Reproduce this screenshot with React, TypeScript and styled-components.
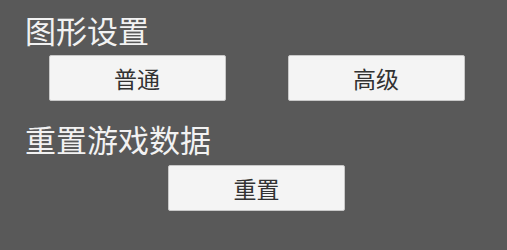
import React from 'react';
import styled, { createGlobalStyle } from 'styled-components';

const GlobalStyle = createGlobalStyle`
  html, body {
    margin: 0;
    padding: 0;
    background: #595959;
  }
  body {
    font-family: "Noto Sans CJK SC", "Noto Sans", sans-serif;
  }
`;

const Page = styled.div`
  width: 507px;
  height: 250px;
  box-sizing: border-box;
  padding: 15px 0 0 0;
  background: #595959;
  display: flex;
  flex-direction: column;
`;

const SectionTitle = styled.div<{ $gap: number }>`
  margin-top: ${(p) => p.$gap}px;
  padding-left: 25px;
  font-size: 31px;
  line-height: 30px;
  color: #f2f2f2;
`;

const ButtonRow = styled.div<{ $gap: number }>`
  display: flex;
  justify-content: center;
  gap: 62px;
  margin-top: ${(p) => p.$gap}px;
  padding-left: 6px;
`;

const OptionButton = styled.button`
  width: 177px;
  height: 46px;
  box-sizing: border-box;
  background: #f4f4f4;
  border: 1px solid #c8c8c8;
  border-radius: 2px;
  font-family: "Noto Sans CJK SC", "Noto Sans", sans-serif;
  font-size: 23px;
  color: #323232;
  padding: 0;
  cursor: pointer;
`;

export default function App() {
  return (
    <>
      <GlobalStyle />
      <Page>
        <SectionTitle $gap={0}>图形设置</SectionTitle>
        <ButtonRow $gap={10}>
          <OptionButton>普通</OptionButton>
          <OptionButton>高级</OptionButton>
        </ButtonRow>
        <SectionTitle $gap={23}>重置游戏数据</SectionTitle>
        <ButtonRow $gap={11}>
          <OptionButton>重置</OptionButton>
        </ButtonRow>
      </Page>
    </>
  );
}
